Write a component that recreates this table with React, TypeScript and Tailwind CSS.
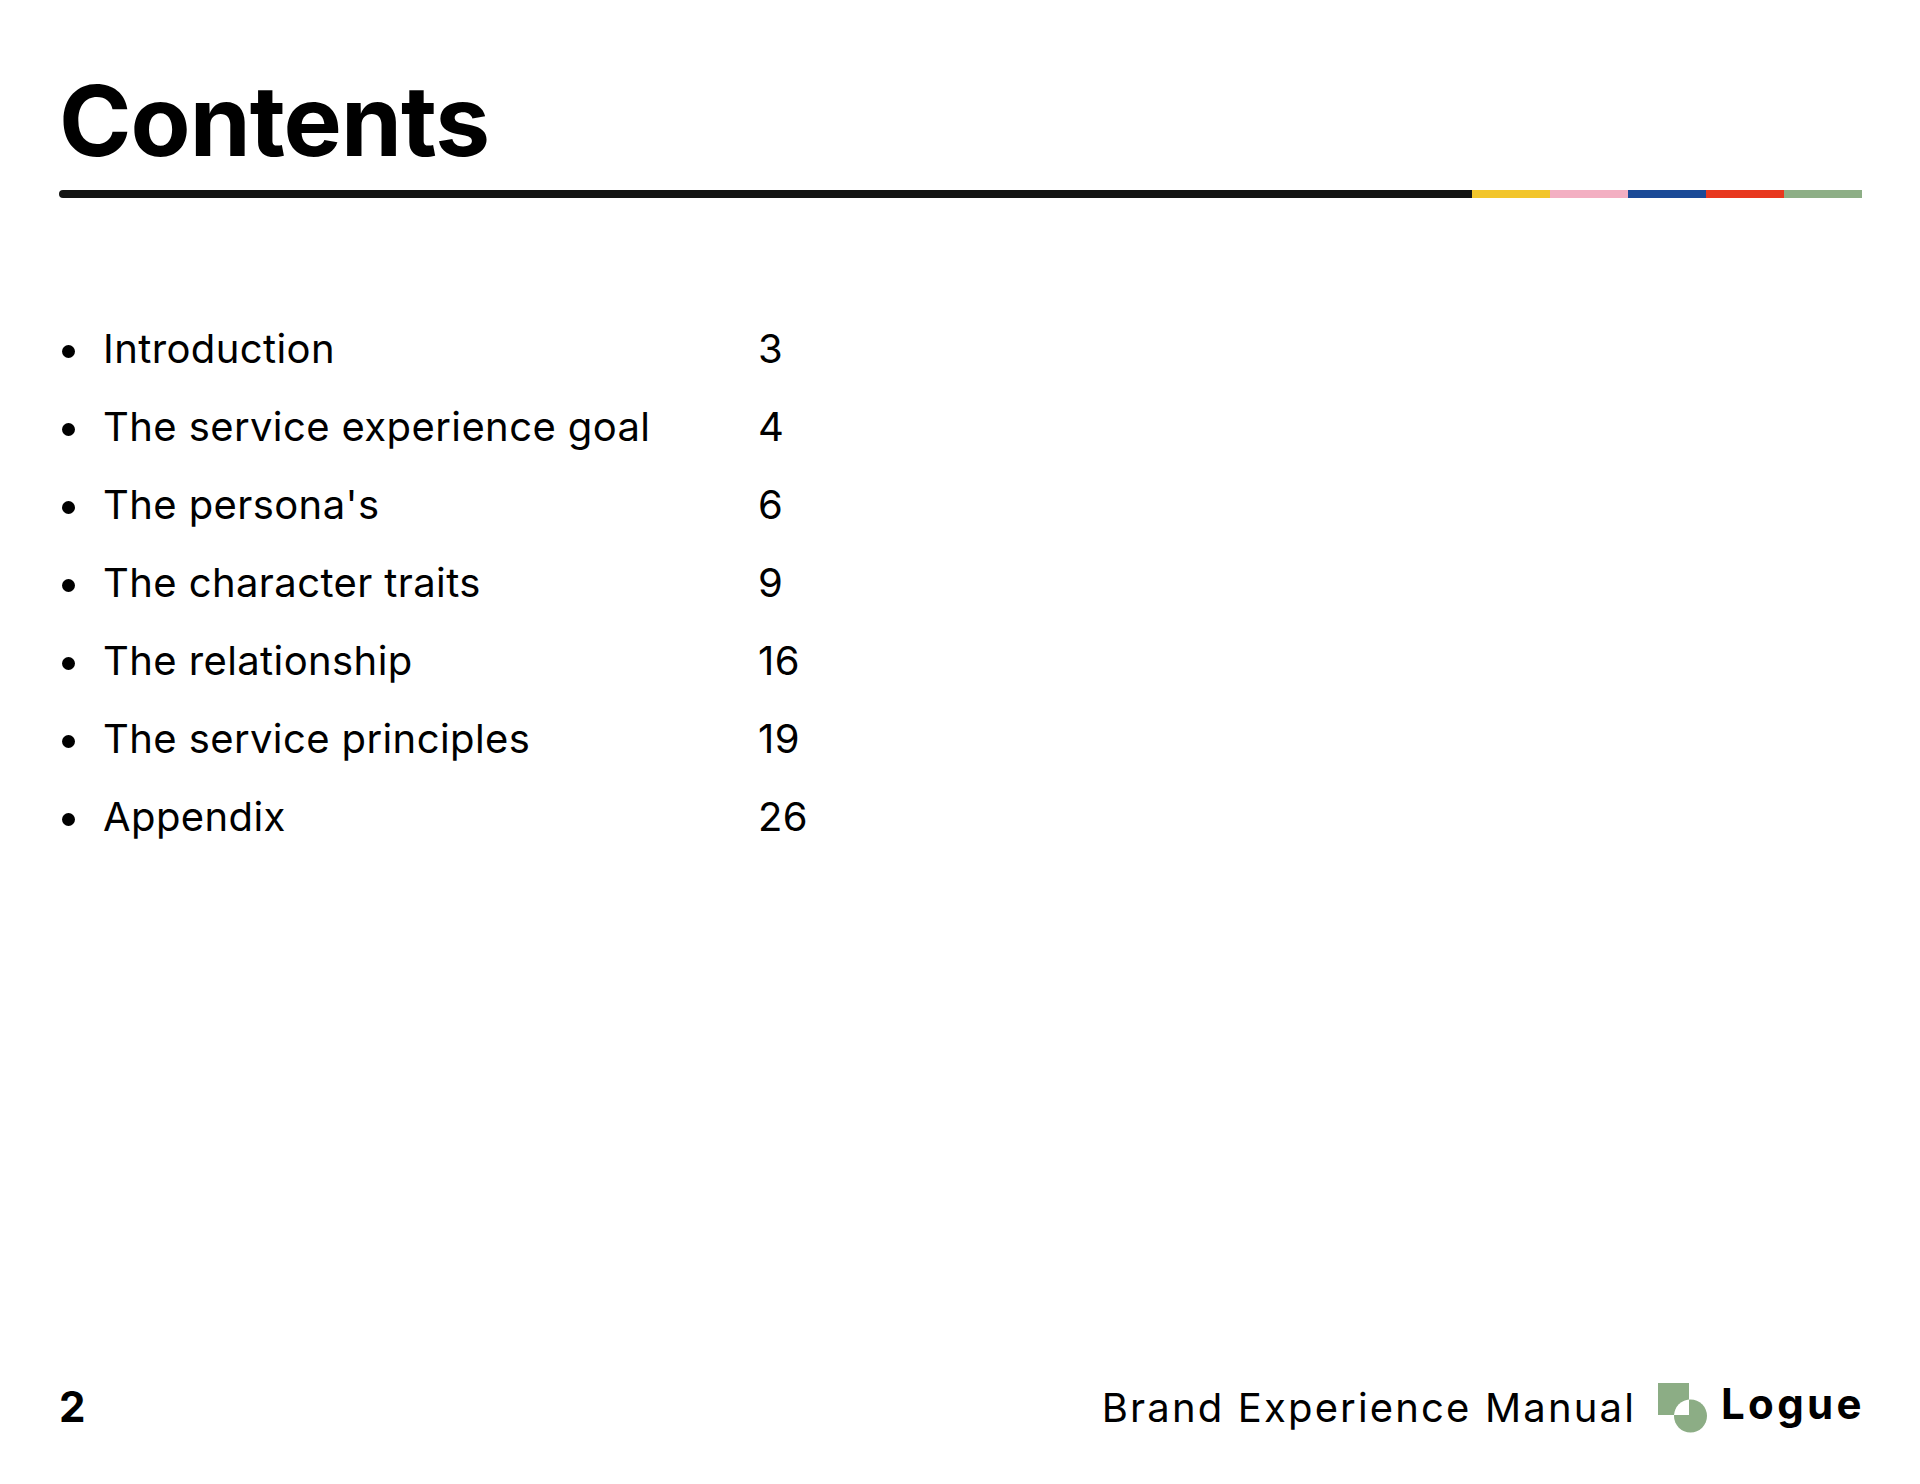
import React from 'react'

const entries = [
  { title: "Introduction", page: "3" },
  { title: "The service experience goal", page: "4" },
  { title: "The persona's", page: "6" },
  { title: "The character traits", page: "9" },
  { title: "The relationship", page: "16" },
  { title: "The service principles", page: "19" },
  { title: "Appendix", page: "26" },
];

const LogueMark = () => (
  <svg width="50" height="50" viewBox="0 0 50 50" className="block">
    <defs>
      <clipPath id="quarter">
        <rect x="0" y="0" width="31" height="32" />
      </clipPath>
    </defs>
    <rect x="0" y="0" width="31" height="32" fill="#8cad85" />
    <circle cx="32.5" cy="33" r="16.5" fill="#8cad85" />
    {/* overlap of square and circle stays white */}
    <circle cx="32.5" cy="33" r="16.5" fill="#ffffff" clipPath="url(#quarter)" />
  </svg>
);

export default function App() {
  return (
    <div
      className="w-[1920px] h-[1484px] bg-white text-black flex flex-col pl-[59px] pr-[58px]"
      style={{ fontFamily: "Inter, 'Noto Sans', sans-serif" }}
    >
      {/* Title */}
      <h1 className="pt-[72px] text-[98px] leading-[98px] font-bold tracking-[-0.01em]">Contents</h1>

      {/* Divider */}
      <div className="mt-[20px] flex h-[8px]">
        <div className="flex-1 bg-[#131413] rounded-l-full" />
        <div className="w-[78px] bg-[#f2c52b]" />
        <div className="w-[78px] bg-[#f3afc2]" />
        <div className="w-[78px] bg-[#1b4a97]" />
        <div className="w-[78px] bg-[#e8381f]" />
        <div className="w-[78px] bg-[#8dae86]" />
      </div>

      {/* Table of contents */}
      <ul className="mt-[112px] flex flex-col">
        {entries.map((item) => (
          <li key={item.title} className="flex items-center h-[78px] text-[40px] leading-[78px] tracking-[0.01em]">
            <span className="ml-[3px] mt-[4px] w-[13px] h-[13px] rounded-full bg-black" />
            <span className="ml-[28px] w-[655px]">{item.title}</span>
            <span>{item.page}</span>
          </li>
        ))}
      </ul>

      {/* Footer */}
      <div className="mt-auto mb-[50px] h-[64px] flex items-start">
        <span className="mt-[16px] text-[42px] leading-[42px] font-bold">2</span>
        <div className="ml-auto flex items-start">
          <span className="mt-[18px] text-[40px] leading-[40px] tracking-[0.054em]">Brand Experience Manual</span>
          <div className="ml-[22px] mt-[13px]">
            <LogueMark />
          </div>
          <span className="ml-[13px] mt-[13px] text-[42px] leading-[42px] font-bold tracking-[0.08em] -mr-[3px]">Logue</span>
        </div>
      </div>
    </div>
  );
}
